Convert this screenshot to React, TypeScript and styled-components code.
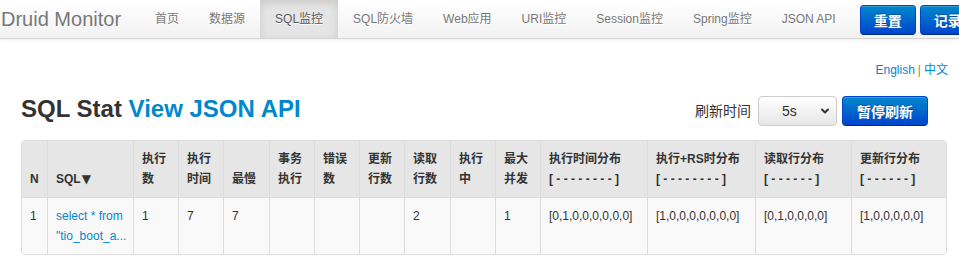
import React from 'react';
import styled, { createGlobalStyle, css } from 'styled-components';
import { FiChevronDown } from 'react-icons/fi';

const GlobalStyle = createGlobalStyle`
  html, body {
    margin: 0;
    padding: 0;
    overflow: hidden;
    background: #ffffff;
  }
  body {
    font-family: 'Liberation Sans', 'Noto Sans CJK SC', Arial, sans-serif;
    font-size: 12px;
    line-height: 20px;
    color: #333333;
  }
`;

const blueButton = css`
  color: #ffffff;
  font-family: inherit;
  font-weight: bold;
  font-size: 14px;
  height: 30px;
  padding: 0 14px;
  border: 1px solid #0044cc;
  border-bottom-color: #002a80;
  border-radius: 4px;
  background: linear-gradient(to bottom, #0088cc, #0044cc);
  box-shadow: inset 0 1px 0 rgba(255, 255, 255, 0.2);
  text-shadow: 0 -1px 0 rgba(0, 0, 0, 0.25);
  cursor: pointer;
  white-space: nowrap;
`;

const Navbar = styled.div`
  display: flex;
  align-items: stretch;
  height: 38px;
  white-space: nowrap;
  background: linear-gradient(to bottom, #ffffff, #f2f2f2);
  border-bottom: 1px solid #d4d4d4;
  box-shadow: 0 1px 4px rgba(0, 0, 0, 0.065);
`;

const Brand = styled.a`
  display: flex;
  align-items: center;
  padding: 0 19px 0 1px;
  font-size: 20px;
  color: #777777;
  text-decoration: none;
  text-shadow: 0 1px 0 #ffffff;
`;

const NavList = styled.ul`
  display: flex;
  margin: 0;
  padding: 0;
  list-style: none;
`;

const NavItem = styled.li<{ $active?: boolean }>`
  display: flex;
  align-items: center;
  padding: 0 15px;
  font-size: 12px;
  color: ${(p) => (p.$active ? '#555555' : '#777777')};
  background: ${(p) => (p.$active ? '#e5e5e5' : 'transparent')};
  box-shadow: ${(p) => (p.$active ? 'inset 0 3px 8px rgba(0, 0, 0, 0.125)' : 'none')};
  text-shadow: 0 1px 0 #ffffff;
`;

const NavButtons = styled.div`
  display: flex;
  gap: 4px;
  margin: 5px 0 0 9px;
`;

const NavButton = styled.button`
  ${blueButton}
  padding: 0 13px;
`;

const Content = styled.div`
  padding: 22px 12px 0 21px;
`;

const LangBar = styled.div`
  text-align: right;
  font-size: 12px;
  line-height: 18px;
  margin-right: -1px;
`;

const Link = styled.a`
  color: #0088cc;
  text-decoration: none;
`;

const Sep = styled.span`
  color: #b07a45;
  margin: 0 3px;
`;

const TitleRow = styled.div`
  display: flex;
  align-items: center;
  justify-content: space-between;
  margin-top: 17px;
  height: 30px;
`;

const Title = styled.h3`
  margin: 0 0 4px;
  font-size: 24px;
  font-weight: bold;
  line-height: 30px;
  color: #333333;
`;

const RefreshBox = styled.div`
  display: flex;
  align-items: center;
  margin-right: 19px;
`;

const RefreshLabel = styled.span`
  font-size: 14px;
  margin-right: 7px;
`;

const SelectWrap = styled.div`
  position: relative;
  width: 79px;
  height: 30px;
  margin-right: 5px;
`;

const Select = styled.select`
  appearance: none;
  width: 100%;
  height: 100%;
  padding: 0 0 0 23px;
  font-family: inherit;
  font-size: 14px;
  color: #333333;
  border: 1px solid #cccccc;
  border-radius: 4px;
  background: linear-gradient(to bottom, #ffffff, #e6e6e6);
`;

const Chevron = styled(FiChevronDown)`
  position: absolute;
  right: 6px;
  top: 9px;
  width: 12px;
  height: 12px;
  stroke-width: 4;
  color: #333333;
  pointer-events: none;
`;

const PauseButton = styled.button`
  ${blueButton}
  width: 86px;
  padding: 0;
`;

const Table = styled.table`
  margin-top: 14px;
  width: 926px;
  table-layout: fixed;
  border-collapse: separate;
  border-spacing: 0;
  border: 1px solid #dddddd;
  border-radius: 4px;
  overflow: hidden;
`;

const Th = styled.th<{ $w: number }>`
  box-sizing: border-box;
  width: ${(p) => p.$w}px;
  padding: 8px;
  text-align: left;
  vertical-align: bottom;
  font-weight: bold;
  font-size: 12px;
  line-height: 20px;
  color: #333333;
  background: #e6e6e6;
  border-left: 1px solid #dddddd;
  &:first-child {
    border-left: none;
  }
`;

const SortArrow = styled.span`
  font-family: 'DejaVu Sans', sans-serif;
  font-size: 12px;
  margin-left: 1px;
`;

const Td = styled.td`
  padding: 8px;
  vertical-align: top;
  font-size: 12px;
  line-height: 20px;
  background: #f9f9f9;
  border-left: 1px solid #dddddd;
  border-top: 1px solid #dddddd;
  &:first-child {
    border-left: none;
  }
`;

const columns: { label: React.ReactNode; w: number }[] = [
  { label: 'N', w: 25 },
  { label: <>SQL<SortArrow>▼</SortArrow></>, w: 86 },
  { label: <>执行<br />数</>, w: 45 },
  { label: <>执行<br />时间</>, w: 45 },
  { label: '最慢', w: 46 },
  { label: <>事务<br />执行</>, w: 45 },
  { label: <>错误<br />数</>, w: 45 },
  { label: <>更新<br />行数</>, w: 45 },
  { label: <>读取<br />行数</>, w: 46 },
  { label: <>执行<br />中</>, w: 45 },
  { label: <>最大<br />并发</>, w: 45 },
  { label: <>执行时间分布<br />[ - - - - - - - - ]</>, w: 107 },
  { label: <>执行+RS时分布<br />[ - - - - - - - - ]</>, w: 108 },
  { label: <>读取行分布<br />[ - - - - - - ]</>, w: 96 },
  { label: <>更新行分布<br />[ - - - - - - ]</>, w: 95 },
];

const navItems = ['首页', '数据源', 'SQL监控', 'SQL防火墙', 'Web应用', 'URI监控', 'Session监控', 'Spring监控', 'JSON API'];

const row = ['1', null, '1', '7', '7', '', '', '', '2', '', '1', '[0,1,0,0,0,0,0,0]', '[1,0,0,0,0,0,0,0]', '[0,1,0,0,0,0]', '[1,0,0,0,0,0]'];

export default function App() {
  return (
    <>
      <GlobalStyle />
      <Navbar>
        <Brand href="#">Druid Monitor</Brand>
        <NavList>
          {navItems.map((item) => (
            <NavItem key={item} $active={item === 'SQL监控'}>
              {item}
            </NavItem>
          ))}
        </NavList>
        <NavButtons>
          <NavButton>重置</NavButton>
          <NavButton>记录日志并重置</NavButton>
        </NavButtons>
      </Navbar>
      <Content>
        <LangBar>
          <Link href="#">English</Link>
          <Sep>|</Sep>
          <Link href="#">中文</Link>
        </LangBar>
        <TitleRow>
          <Title>
            SQL Stat <Link href="#">View JSON API</Link>
          </Title>
          <RefreshBox>
            <RefreshLabel>刷新时间</RefreshLabel>
            <SelectWrap>
              <Select defaultValue="5">
                <option value="5">5s</option>
                <option value="10">10s</option>
                <option value="20">20s</option>
              </Select>
              <Chevron />
            </SelectWrap>
            <PauseButton>暂停刷新</PauseButton>
          </RefreshBox>
        </TitleRow>
        <Table>
          <thead>
            <tr>
              {columns.map((c, i) => (
                <Th key={i} $w={c.w}>
                  {c.label}
                </Th>
              ))}
            </tr>
          </thead>
          <tbody>
            <tr>
              {row.map((v, i) =>
                v === null ? (
                  <Td key={i}>
                    <Link href="#">select * from "tio_boot_a...</Link>
                  </Td>
                ) : (
                  <Td key={i}>{v}</Td>
                ),
              )}
            </tr>
          </tbody>
        </Table>
      </Content>
    </>
  );
}
